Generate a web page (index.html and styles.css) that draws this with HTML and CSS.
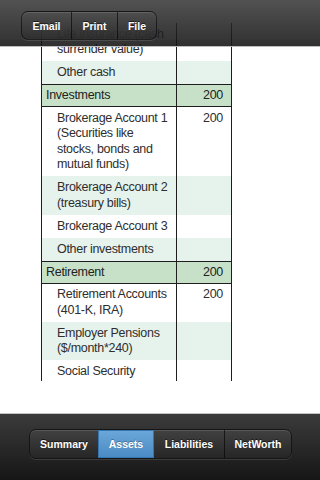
FILE: index.html
```html
<!DOCTYPE html>
<html>
<head>
<meta charset="utf-8">
<link rel="stylesheet" href="styles.css">
</head>
<body>
<div class="screen">
  <div class="content">
    <div class="scroller">
      <div class="table">
        <div class="row"><div class="c1">Life Insurance (cash surrender value)</div><div class="c2"></div></div>
        <div class="row alt"><div class="c1">Other cash</div><div class="c2"></div></div>
        <div class="row group"><div class="c1">Investments</div><div class="c2">200</div></div>
        <div class="row"><div class="c1">Brokerage Account 1 (Securities like stocks, bonds and mutual funds)</div><div class="c2">200</div></div>
        <div class="row alt"><div class="c1">Brokerage Account 2 (treasury bills)</div><div class="c2"></div></div>
        <div class="row"><div class="c1">Brokerage Account 3</div><div class="c2"></div></div>
        <div class="row alt"><div class="c1">Other investments</div><div class="c2"></div></div>
        <div class="row group"><div class="c1">Retirement</div><div class="c2">200</div></div>
        <div class="row"><div class="c1">Retirement Accounts (401-K, IRA)</div><div class="c2">200</div></div>
        <div class="row alt"><div class="c1">Employer Pensions ($/month*240)</div><div class="c2"></div></div>
        <div class="row"><div class="c1">Social Security</div><div class="c2"></div></div>
      </div>
    </div>
  </div>
  <div class="topbar">
    <div class="seg seg-top">
      <div class="item w-email">Email</div>
      <div class="item w-print">Print</div>
      <div class="item w-file">File</div>
    </div>
  </div>
  <div class="tabbar">
    <div class="seg seg-tabs">
      <div class="item w-summary">Summary</div>
      <div class="item w-assets active">Assets</div>
      <div class="item w-liab">Liabilities</div>
      <div class="item w-net">NetWorth</div>
    </div>
  </div>
</div>
</body>
</html>
```

FILE: styles.css
```css
* { box-sizing: border-box; }
html, body { margin: 0; padding: 0; background: #fff; }
body { font-family: "Liberation Sans", Arial, sans-serif; }

.screen {
  position: relative;
  width: 320px;
  height: 480px;
  display: flex;
  flex-direction: column;
  overflow: hidden;
  background: #fff;
}

.content {
  flex: 1;
  padding-top: 23px;
}

.scroller {
  height: 358px;
  overflow: hidden;
  margin-left: 41px;
}

.table {
  width: 191px;
  border-left: 1px solid #1e1e1e;
  border-right: 1px solid #1e1e1e;
  font-size: 12.5px;
  letter-spacing: -0.3px;
  line-height: 15.4px;
  color: #2e2e2e;
}

.row {
  display: grid;
  grid-template-columns: 135px 54px;
  background: #fff;
}
.row.alt { background: #e6f2ec; }
.row.group {
  background: #c7e0c8;
  border-top: 1px solid #1e1e1e;
  border-bottom: 1px solid #1e1e1e;
  color: #222;
}

.c1 {
  border-right: 1px solid #1e1e1e;
  padding: 3.8px 4px 3.8px 15px;
}
.c2 {
  padding: 3.8px 8px 3.8px 4px;
  text-align: right;
}
.row.group .c1 { padding: 2.7px 4px 2.7px 4px; }
.row.group .c2 { padding: 2.7px 8px 2.7px 4px; }

/* top toolbar (translucent overlay) */
.topbar {
  position: absolute;
  left: 0;
  top: 0;
  width: 320px;
  height: 47px;
  background: linear-gradient(to bottom, rgba(58,58,58,0.88), rgba(20,20,20,0.88));
  border-bottom: 1px solid #bdbdbd;
  padding: 11px 0 0 21px;
}

.seg {
  display: flex;
  height: 29px;
  border-radius: 7px;
  border: 1px solid rgba(0,0,0,0.55);
  box-shadow: 0 1px 0 rgba(255,255,255,0.12), inset 0 1px 0 rgba(255,255,255,0.12);
  overflow: hidden;
}
.seg-top {
  width: 136px;
  background: linear-gradient(to bottom, rgba(80,80,80,0.7), rgba(45,45,45,0.7));
}
.item {
  display: flex;
  align-items: center;
  justify-content: center;
  color: #fff;
  font-weight: bold;
  font-size: 10.5px;
  text-shadow: 0 -1px 0 rgba(0,0,0,0.6);
  border-left: 1px solid rgba(0,0,0,0.6);
}
.item:first-child { border-left: none; }
.w-email { width: 49px; }
.w-print { width: 46px; }
.w-file { flex: 1; }

/* bottom tab bar */
.tabbar {
  height: 67px;
  border-top: 1px solid #c4c4c4;
  background: linear-gradient(to bottom, #3b3b3b, #161616);
  padding: 15px 0 0 29px;
}
.seg-tabs {
  width: 263px;
  height: 30px;
  background: linear-gradient(to bottom, #414141, #262626);
  border-color: #151515;
}
.w-summary { width: 68px; }
.w-assets { width: 56px; }
.w-liab { width: 70px; }
.w-net { flex: 1; }
.item.active {
  background: linear-gradient(to bottom, #6aa6d8, #4b8bc4);
  border: 1px solid #3576b2;
  text-shadow: 0 -1px 0 rgba(0,0,0,0.3);
}
.item.active + .item { border-left: none; }
```
